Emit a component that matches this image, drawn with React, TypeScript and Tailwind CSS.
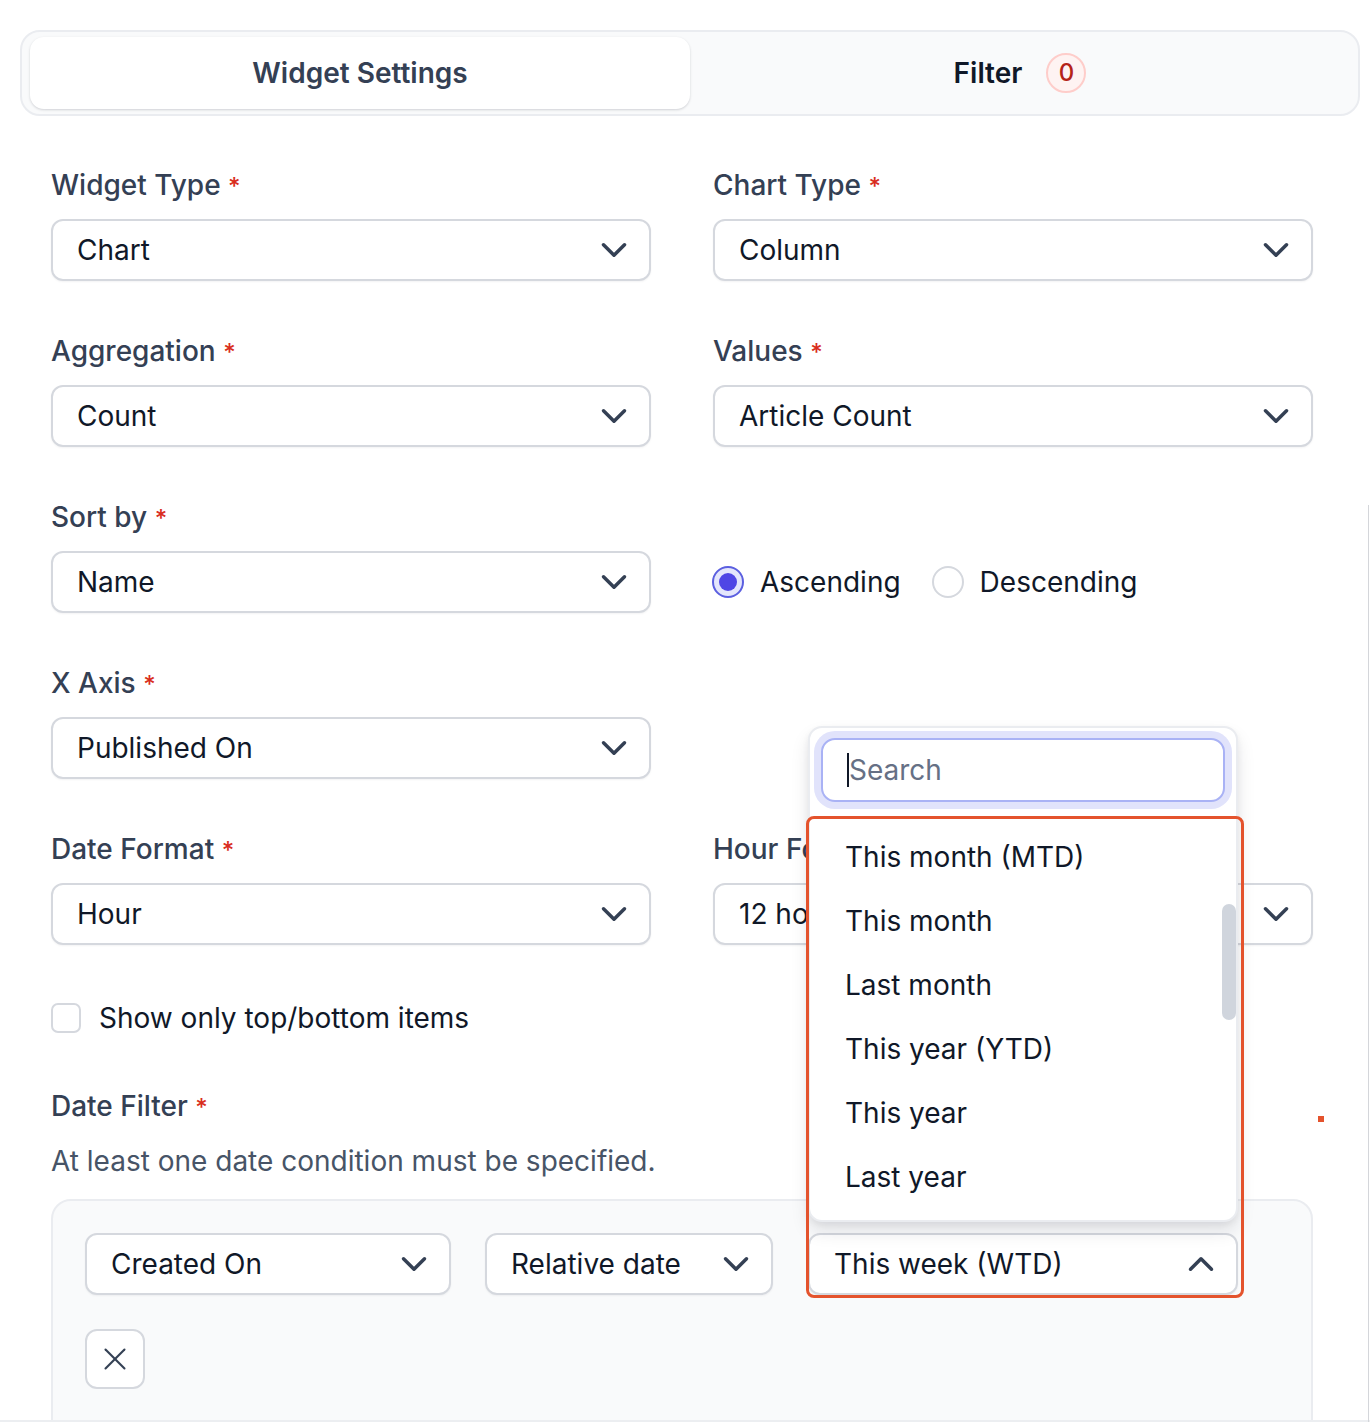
import React from "react";
import { ChevronDown, ChevronUp, X } from "lucide-react";

function Label({ text }: { text: string }) {
  return (
    <div className="mb-[17px] h-[34px] text-[28px] font-medium leading-[34px] text-[#344054]">
      {text} <span className="text-[24px] text-[#d92d20]">*</span>
    </div>
  );
}

function Select({
  value,
  className = "",
  up = false,
}: {
  value: string;
  className?: string;
  up?: boolean;
}) {
  return (
    <div
      className={
        "flex h-[62px] items-center justify-between rounded-[12px] border-2 border-[#d5d8de] bg-white pl-[24px] pr-[14px] shadow-[0_1px_2px_rgba(16,24,40,0.05)] " +
        className
      }
    >
      <span className="truncate text-[28px] leading-[34px] text-[#101828]">{value}</span>
      {up ? (
        <ChevronUp size={42} strokeWidth={2} className="shrink-0 text-[#344054]" />
      ) : (
        <ChevronDown size={42} strokeWidth={2} className="shrink-0 text-[#344054]" />
      )}
    </div>
  );
}

function Field({ label, value }: { label: string; value: string }) {
  return (
    <div>
      <Label text={label} />
      <Select value={value} />
    </div>
  );
}

const options = [
  "This month (MTD)",
  "This month",
  "Last month",
  "This year (YTD)",
  "This year",
  "Last year",
];

export default function App() {
  return (
    <div
      className="relative h-[1426px] w-[1370px] overflow-hidden bg-white"
      style={{ fontFamily: "Inter, 'Noto Sans', sans-serif" }}
    >
      <div className="h-[1422px] overflow-hidden border-b-2 border-[#eceef1] pt-[30px]">
        {/* Tabs */}
        <div className="ml-[20px] flex h-[86px] w-[1340px] rounded-[20px] border-2 border-[#eaecf0] bg-[#f9fafb] px-[8px] py-[5px]">
          <div className="flex w-[660px] items-center justify-center rounded-[14px] bg-white shadow-[0_1px_3px_rgba(16,24,40,0.12),0_1px_2px_rgba(16,24,40,0.06)]">
            <span className="text-[28px] font-semibold text-[#344054]">Widget Settings</span>
          </div>
          <div className="flex flex-1 items-center justify-center gap-[24px]">
            <span className="text-[28px] font-semibold text-[#101828]">Filter</span>
            <span className="flex h-[40px] w-[40px] items-center justify-center rounded-full border-2 border-[#fecdca] bg-[#fef3f2] text-[24px] font-medium text-[#b42318]">
              0
            </span>
          </div>
        </div>

        {/* Form */}
        <div className="ml-[51px] mt-[52px] w-[1262px]">
          <div className="grid grid-cols-2 gap-x-[62px] gap-y-[53px]">
            <Field label="Widget Type" value="Chart" />
            <Field label="Chart Type" value="Column" />
            <Field label="Aggregation" value="Count" />
            <Field label="Values" value="Article Count" />
            <Field label="Sort by" value="Name" />
            <div className="pt-[51px]">
              <div className="-ml-[1px] flex h-[62px] items-center">
                <span className="flex h-[32px] w-[32px] items-center justify-center rounded-full border-2 border-[#5b5fe0] bg-[#e4e6fc]">
                  <span className="h-[18px] w-[18px] rounded-full bg-[#4f46e5]" />
                </span>
                <span className="ml-[16px] text-[28px] text-[#101828]">Ascending</span>
                <span className="ml-[31px] h-[32px] w-[32px] rounded-full border-2 border-[#d5d8de] bg-white" />
                <span className="ml-[16px] text-[28px] text-[#101828]">Descending</span>
              </div>
            </div>
            <Field label="X Axis" value="Published On" />
            <div />
            <Field label="Date Format" value="Hour" />
            <div>
              <div className="mb-[17px] h-[34px] text-[28px] font-medium leading-[34px] text-[#344054]">
                Hour Format
              </div>
              <Select value="12 hour" />
            </div>
          </div>

          {/* Checkbox */}
          <div className="mt-[58px] flex h-[30px] items-center">
            <span className="h-[30px] w-[30px] rounded-[7px] border-2 border-[#d5d8de] bg-white" />
            <span className="ml-[18px] text-[28px] leading-[34px] text-[#101828]">
              Show only top/bottom items
            </span>
          </div>

          {/* Date filter */}
          <div className="mt-[56px] h-[34px] text-[28px] font-medium leading-[34px] text-[#344054]">
            Date Filter <span className="text-[24px] text-[#d92d20]">*</span>
          </div>
          <div className="mt-[21px] h-[34px] text-[28px] leading-[34px] text-[#475467]">
            At least one date condition must be specified.
          </div>

          <div className="mt-[21px] rounded-[20px] border-2 border-[#eaecf0] bg-[#f9fafb] p-[32px] pb-[80px]">
            <div className="flex">
              <Select value="Created On" className="w-[366px]" />
              <Select value="Relative date" className="ml-[34px] w-[288px]" />
              <div className="relative ml-[35px] w-[430px]">
                <Select value="This week (WTD)" up />

                {/* Dropdown panel */}
                <div className="absolute bottom-[73px] left-0 right-0 z-10 h-[496px] overflow-hidden rounded-[14px] border-2 border-[#eaecf0] bg-white shadow-[0_10px_18px_rgba(16,24,40,0.10),0_3px_6px_rgba(16,24,40,0.06)]">
                  <div className="px-[11px] pb-[15px] pt-[10px]">
                    <div className="flex h-[64px] items-center rounded-[14px] border-2 border-[#a9b2f5] bg-white pl-[24px] shadow-[0_0_0_7px_#e1e3fb]">
                      <span className="h-[34px] w-[2px] bg-[#101828]" />
                      <span className="text-[28px] leading-[34px] text-[#667085]">Search</span>
                    </div>
                  </div>
                  <div className="px-[10px] py-[8px]">
                    {options.map((o) => (
                      <div key={o} className="flex h-[64px] items-center px-[25px] text-[28px] text-[#101828]">
                        {o}
                      </div>
                    ))}
                  </div>
                  <div className="absolute right-[0px] top-[176px] h-[116px] w-[14px] rounded-full bg-[#d0d5dd]" />
                </div>

                {/* Annotation outline */}
                <div className="pointer-events-none absolute -bottom-[3px] -left-[2px] -right-[6px] -top-[417px] z-20 rounded-[8px] border-[3px] border-[#e4532d]" />
              </div>
            </div>
            <div className="mt-[34px] flex h-[60px] w-[60px] items-center justify-center rounded-[12px] border-2 border-[#d5d8de] bg-white">
              <X size={38} strokeWidth={1.3} className="text-[#344054]" />
            </div>
          </div>
        </div>
      </div>

      {/* small decorations */}
      <div className="absolute left-[1318px] top-[1116px] h-[6px] w-[6px] bg-[#e4532d]" />
      <div className="absolute left-[1368px] top-[505px] h-[917px] w-px bg-[#d4d6da]" />
    </div>
  );
}
